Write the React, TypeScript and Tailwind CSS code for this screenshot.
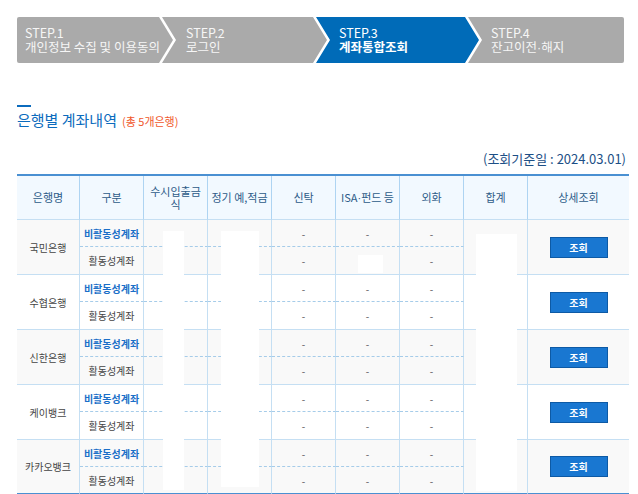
import React from "react";

const Dot = () => <span className="font-['Liberation_Sans',sans-serif]">·</span>;

const steps = [
  {
    no: "STEP.1",
    label: <>개인정보 수집 및 이용동의</>,
    width: "w-[156px]",
    pad: "pl-[8px]",
    clip: "[clip-path:polygon(0_0,calc(100%_-_14px)_0,100%_50%,calc(100%_-_14px)_100%,0_100%)] rounded-l-[2px]",
    active: false,
  },
  {
    no: "STEP.2",
    label: <>로그인</>,
    width: "w-[165px] -ml-[11px]",
    pad: "pl-[24px]",
    clip: "[clip-path:polygon(0_0,calc(100%_-_14px)_0,100%_50%,calc(100%_-_14px)_100%,0_100%,14px_50%)]",
    active: false,
  },
  {
    no: "STEP.3",
    label: <>계좌통합조회</>,
    width: "w-[163px] -ml-[11px]",
    pad: "pl-[23px]",
    clip: "[clip-path:polygon(0_0,calc(100%_-_14px)_0,100%_50%,calc(100%_-_14px)_100%,0_100%,14px_50%)]",
    active: true,
  },
  {
    no: "STEP.4",
    label: (
      <>
        잔고이전
        <Dot />
        해지
      </>
    ),
    width: "w-[156px] -ml-[11px]",
    pad: "pl-[23px]",
    clip: "[clip-path:polygon(0_0,100%_0,100%_100%,0_100%,14px_50%)] rounded-r-[2px]",
    active: false,
  },
];

const banks = ["국민은행", "수협은행", "신한은행", "케이뱅크", "카카오뱅크"];

const cols = "grid grid-cols-[63px_64px_64px_64px_64px_64px_64px_64px_101px]";
const vline = "border-r border-[#c5dff3]";

const BankRows = ({ name, shaded, last }: { name: string; shaded: boolean; last: boolean }) => {
  const dashed = `${vline} border-b border-b-[#a6cce9] border-dashed [border-right-style:solid]`;
  const bottom = last ? "border-b-2 border-b-[#4a90d2]" : "border-b border-b-[#c5dff3]";
  const lower = `${vline} ${bottom}`;
  return (
    <div
      className={`${cols} grid-rows-[27px_28px] text-[10px] ${
        shaded ? "bg-[#f9f9f9]" : "bg-white"
      }`}
    >
      <div className={`row-span-2 flex items-center justify-center text-[#444] ${lower}`}>
        {name}
      </div>
      <div className={`flex items-center justify-center font-bold text-[#1a6fc8] ${dashed}`}>
        비활동성계좌
      </div>
      <div className={dashed} />
      <div className={dashed} />
      <div className={`flex items-center justify-center text-[#555] ${dashed}`}>-</div>
      <div className={`flex items-center justify-center text-[#555] ${dashed}`}>-</div>
      <div className={`flex items-center justify-center text-[#555] ${dashed}`}>-</div>
      <div className={`row-span-2 ${lower}`} />
      <div className={`row-span-2 flex items-center justify-center ${bottom}`}>
        <button className="h-[21px] w-[58px] border border-[#0d5aa5] bg-[#1977d1] text-[10px] font-bold text-white">
          조회
        </button>
      </div>
      <div className={`flex items-center justify-center text-[#444] ${lower}`}>활동성계좌</div>
      <div className={lower} />
      <div className={lower} />
      <div className={`flex items-center justify-center text-[#555] ${lower}`}>-</div>
      <div className={`flex items-center justify-center text-[#555] ${lower}`}>-</div>
      <div className={`flex items-center justify-center text-[#555] ${lower}`}>-</div>
    </div>
  );
};

export default function App() {
  const heads: React.ReactNode[] = [
    "은행명",
    "구분",
    <>
      수시입출금
      <br />식
    </>,
    "정기 예,적금",
    "신탁",
    <>
      ISA
      <Dot />
      펀드 등
    </>,
    "외화",
    "합계",
    "상세조회",
  ];
  return (
    <div className="h-[494px] w-[638px] overflow-hidden bg-white px-[17px] pt-[17px] font-['Noto_Sans_CJK_KR','Noto_Sans',sans-serif]">
      <div className="flex h-[46px]">
        {steps.map((s) => (
          <div
            key={s.no}
            className={`flex shrink-0 flex-col justify-center text-[12.5px] leading-[14px] ${s.width} ${s.pad} ${s.clip} ${
              s.active ? "bg-[#006bb8] text-white" : "bg-[#aaaaaa] text-[#f6f6f6]"
            }`}
          >
            <span>{s.no}</span>
            <span className={s.active ? "font-bold" : ""}>{s.label}</span>
          </div>
        ))}
      </div>

      <div className="mt-[42px] h-[2px] w-[14px] bg-[#0b6bbd]" />
      <div className="mt-[3px] flex items-baseline gap-[5px] leading-[20px]">
        <h2 className="text-[15px] text-[#0b6bbd]">은행별 계좌내역</h2>
        <span className="text-[11px] text-[#f0582c]">(총 5개은행)</span>
      </div>

      <div className="mt-[19px] w-[612px] pr-[3px] text-right text-[13px] leading-[18px] text-[#1c4f86]">
        (조회기준일 : 2024.03.01)
      </div>

      <div className="relative mt-[6px] w-[612px] border-t-2 border-[#4a90d2]">
        <div className={`${cols} h-[44px] bg-[#f2f9ff] text-[11px] leading-[13px] text-[#2d5b88]`}>
          {heads.map((h, i) => (
            <div
              key={i}
              className={`flex items-center justify-center whitespace-nowrap text-center border-b border-b-[#c5dff3] ${
                i < heads.length - 1 ? "border-r border-r-[#aed4f2]" : ""
              }`}
            >
              <span>{h}</span>
            </div>
          ))}
        </div>
        {banks.map((b, i) => (
          <BankRows key={b} name={b} shaded={i % 2 === 0} last={i === banks.length - 1} />
        ))}

        {/* masked values */}
        <div className="absolute left-[146px] top-[55px] h-[259px] w-[21px] bg-white" />
        <div className="absolute left-[204px] top-[55px] h-[256px] w-[38px] bg-white" />
        <div className="absolute left-[341px] top-[79px] h-[18px] w-[25px] bg-white" />
        <div className="absolute left-[459px] top-[58px] h-[257px] w-[41px] bg-white" />
      </div>
    </div>
  );
}
